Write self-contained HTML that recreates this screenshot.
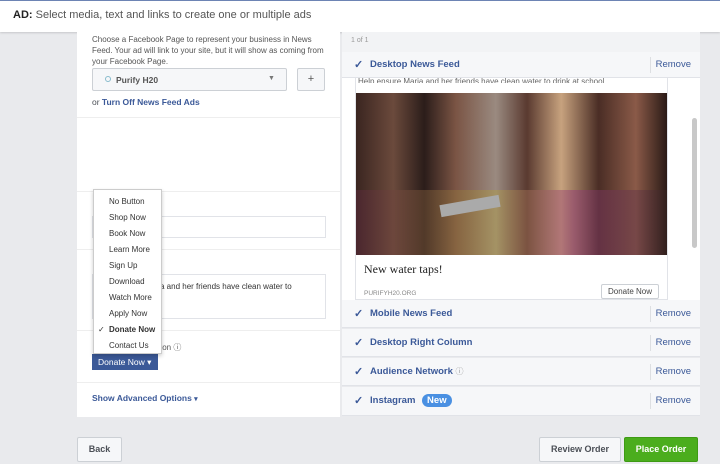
<!DOCTYPE html>
<html><head><style>
*{margin:0;padding:0;box-sizing:border-box}
body{width:720px;height:464px;background:#e9eaed;font-family:"Liberation Sans",sans-serif;font-size:9px;color:#4b4f56;position:relative;overflow:hidden}
.abs{position:absolute}
.blue{color:#3b5998;font-weight:bold}
.row{position:absolute;left:342px;width:358px;height:28px;background:#f6f7f9;border-bottom:1px solid #e1e3e8}
.row .ck{position:absolute;left:12px;top:7px;color:#3b5998;font-size:11px;font-weight:bold;line-height:14px}
.row .t{position:absolute;left:28px;top:7px;font-size:9.5px;color:#3b5998;font-weight:bold;line-height:14px;white-space:nowrap}
.row .r{position:absolute;right:0;top:6px;height:16px;border-left:1px solid #dddfe2;width:50px;text-align:right;padding-right:9px;padding-top:2px;color:#3b5998;font-size:9.5px}
.mi{height:16px;line-height:16px;padding-left:15px;font-size:8px;color:#333}
</style></head><body>
<div class="abs" style="left:0;top:0;width:720px;height:32px;background:#fff;border-top:1px solid #6d84b4;box-shadow:0 1px 2px rgba(0,0,0,.15)"></div>
<div class="abs" style="left:13px;top:9px;font-size:11px;color:#555"><b style="color:#222">AD:</b> Select media, text and links to create one or multiple ads</div>

<div class="abs" style="left:77px;top:32px;width:263px;height:385px;background:#fff"></div>
<div class="abs" style="left:92px;top:34px;width:240px;font-size:8px;line-height:11px;color:#555">Choose a Facebook Page to represent your business in News Feed. Your ad will link to your site, but it will show as coming from your Facebook Page.</div>
<div class="abs" style="left:92px;top:68px;width:195px;height:23px;border:1px solid #ccd0d5;border-radius:2px;background:#f6f7f9"></div>
<div class="abs" style="left:105px;top:76px;width:6px;height:6px;border:1px solid #8bc;border-radius:50%"></div>
<div class="abs" style="left:116px;top:75px;font-size:8.5px;color:#555;font-weight:bold">Purify H20</div>
<div class="abs" style="left:268px;top:75px;font-size:7px;color:#777">▼</div>
<div class="abs" style="left:297px;top:68px;width:28px;height:23px;border:1px solid #ccd0d5;border-radius:2px;background:#f6f7f9;text-align:center;line-height:21px;font-size:11px;color:#555">+</div>
<div class="abs" style="left:92px;top:97px;font-size:8.5px">or <span class="blue">Turn Off News Feed Ads</span></div>
<div class="abs" style="left:77px;top:117px;width:263px;border-top:1px solid #eee"></div>
<div class="abs" style="left:77px;top:191px;width:263px;border-top:1px solid #eee"></div>
<div class="abs" style="left:92px;top:216px;width:234px;height:22px;border:1px solid #e1e3e8"></div>
<div class="abs" style="left:77px;top:249px;width:263px;border-top:1px solid #eee"></div>
<div class="abs" style="left:92px;top:274px;width:234px;height:45px;border:1px solid #e1e3e8"></div>
<div class="abs" style="left:160px;top:281px;font-size:8px;line-height:12px;color:#333">a and her friends have clean water to</div>
<div class="abs" style="left:77px;top:330px;width:263px;border-top:1px solid #eee"></div>
<div class="abs" style="left:160px;top:342px;font-size:8px;color:#555">ton ⓘ</div>
<div class="abs" style="left:92px;top:354px;width:66px;height:16px;background:#3b5998;color:#fff;font-size:8.5px;line-height:16px;padding-left:6px">Donate Now ▾</div>
<div class="abs" style="left:77px;top:382px;width:263px;border-top:1px solid #eee"></div>
<div class="abs blue" style="left:92px;top:393px;font-size:8.5px">Show Advanced Options <span style="font-size:7px">▾</span></div>

<div class="abs" style="left:93px;top:189px;width:69px;height:165px;background:#fff;border:1px solid #ccc;box-shadow:0 2px 4px rgba(0,0,0,.2);padding-top:4px">
<div class="mi">No Button</div><div class="mi">Shop Now</div><div class="mi">Book Now</div><div class="mi">Learn More</div><div class="mi">Sign Up</div><div class="mi">Download</div><div class="mi">Watch More</div><div class="mi">Apply Now</div>
<div class="mi" style="font-weight:bold;position:relative"><span style="position:absolute;left:4px;font-weight:normal">✓</span>Donate Now</div><div class="mi">Contact Us</div></div>

<div class="abs" style="left:342px;top:32px;width:358px;height:20px;background:#f2f3f5"></div>
<div class="abs" style="left:351px;top:37px;font-size:7px;color:#999">1 of 1</div>
<div class="abs" style="left:342px;top:52px;width:358px;height:248px;background:#fff"></div>
<div class="row" style="top:52px;height:26px"><span class="ck" style="top:6px">✓</span><span class="t" style="top:6px">Desktop News Feed</span><span class="r" style="top:5px">Remove</span></div>
<div class="abs" style="left:355px;top:78px;width:313px;height:222px;border:1px solid #e1e3e8;border-top:none"></div>
<div class="abs" style="left:358px;top:77px;font-size:8px;color:#666;height:6px;overflow:hidden">Help ensure Maria and her friends have clean water to drink at school</div>
<div class="abs" style="left:356px;top:93px;width:311px;height:162px;background:linear-gradient(90deg,#3a2520 0%,#6b4a3c 12%,#2b1d1a 22%,#7a5444 32%,#9a8a80 45%,#5a3a30 55%,#c7a27e 66%,#4a2d25 78%,#8a5a48 90%,#2a1a16 100%)"></div>
<div class="abs" style="left:356px;top:190px;width:311px;height:65px;background:linear-gradient(90deg,rgba(90,40,60,.5),rgba(180,160,60,.4) 45%,rgba(150,60,120,.5) 70%,rgba(60,40,40,.4));"></div>
<div class="abs" style="left:440px;top:200px;width:60px;height:12px;background:#aaa;transform:rotate(-10deg)"></div>
<div class="abs" style="left:364px;top:262px;font-family:'Liberation Serif',serif;font-size:12px;color:#222">New water taps!</div>
<div class="abs" style="left:364px;top:290px;font-size:6.5px;color:#888">PURIFYH20.ORG</div>
<div class="abs" style="left:601px;top:284px;width:58px;height:15px;border:1px solid #ccd0d5;border-radius:2px;font-size:8px;text-align:center;line-height:13px;color:#444">Donate Now</div>
<div class="abs" style="left:692px;top:118px;width:5px;height:130px;background:#c8c8c8;border-radius:3px"></div>
<div class="row" style="top:300px"><span class="ck">✓</span><span class="t">Mobile News Feed</span><span class="r">Remove</span></div>
<div class="row" style="top:329px"><span class="ck">✓</span><span class="t">Desktop Right Column</span><span class="r">Remove</span></div>
<div class="row" style="top:358px"><span class="ck">✓</span><span class="t">Audience Network <span style="color:#999;font-weight:normal;font-size:8px">ⓘ</span></span><span class="r">Remove</span></div>
<div class="row" style="top:387px;height:29px"><span class="ck">✓</span><span class="t">Instagram <span style="display:inline-block;background:#4a90e2;color:#fff;border-radius:7px;padding:0 5px;margin-left:4px;line-height:13px;vertical-align:top">New</span></span><span class="r">Remove</span></div>

<div class="abs" style="left:77px;top:437px;width:45px;height:25px;background:#f6f7f9;border:1px solid #ccd0d5;border-radius:2px;font-size:9px;font-weight:bold;color:#4b4f56;text-align:center;line-height:23px">Back</div>
<div class="abs" style="left:539px;top:437px;width:82px;height:25px;background:#f6f7f9;border:1px solid #ccd0d5;border-radius:2px;font-size:9px;font-weight:bold;color:#4b4f56;text-align:center;line-height:23px">Review Order</div>
<div class="abs" style="left:624px;top:437px;width:74px;height:25px;background:#4bad1d;border:1px solid #3e9a14;border-radius:2px;font-size:9px;font-weight:bold;color:#fff;text-align:center;line-height:23px">Place Order</div>
</body></html>
